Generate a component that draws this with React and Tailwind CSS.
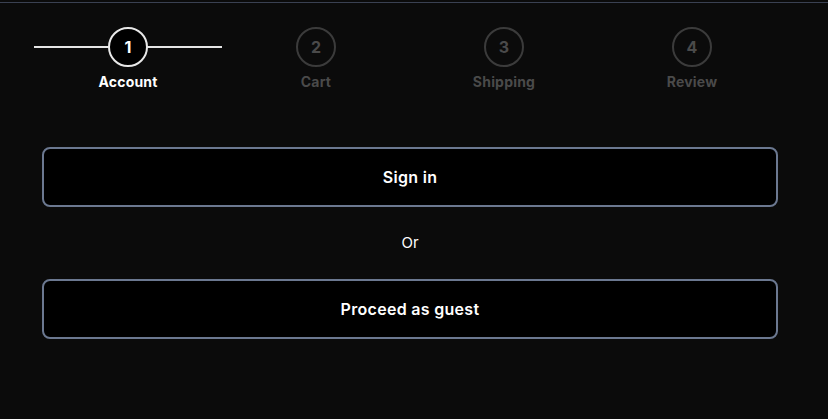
import React from 'react';

const steps = [
  { n: 1, label: 'Account' },
  { n: 2, label: 'Cart' },
  { n: 3, label: 'Shipping' },
  { n: 4, label: 'Review' },
];

const Step = ({ n, label, active }) => (
  <div className="relative flex flex-col items-center">
    {active && <div className="absolute left-0 right-0 top-[19px] h-[2px] bg-[#e5e5e5]" />}
    <div
      className={`relative z-10 flex h-10 w-10 items-center justify-center rounded-full border-2 text-base font-bold ${
        active ? 'border-[#e8e8e8] bg-black text-white' : 'border-[#3b3b3b] bg-[#0b0b0b] text-[#4a4a4a]'
      }`}
    >
      {n}
    </div>
    <div className={`mt-[5px] text-sm font-bold leading-5 tracking-[0.2px] ${active ? 'text-white' : 'text-[#4a4a4a]'}`}>
      {label}
    </div>
  </div>
);

const App = () => {
  return (
    <div className="min-h-screen bg-[#0b0b0b] text-white" style={{ fontFamily: 'Inter, "Noto Sans", sans-serif' }}>
      <div className="h-[2px]" />
      <div className="h-px bg-[#3a4152]" />
      <div className="pl-[34px] pr-[42px] pt-[24px]">
        <div className="grid grid-cols-4">
          {steps.map((s) => (
            <Step key={s.n} n={s.n} label={s.label} active={s.n === 1} />
          ))}
        </div>
        <div className="mx-2 mt-[55px] flex flex-col">
          <button className="h-[60px] rounded-lg border-2 border-[#6b7890] bg-black text-base font-semibold tracking-[0.3px] text-white">
            Sign in
          </button>
          <div className="my-6 text-center text-[15px] leading-6 text-white">Or</div>
          <button className="h-[60px] rounded-lg border-2 border-[#6b7890] bg-black text-base font-semibold tracking-[0.3px] text-white">
            Proceed as guest
          </button>
        </div>
      </div>
    </div>
  );
};

export default App;
